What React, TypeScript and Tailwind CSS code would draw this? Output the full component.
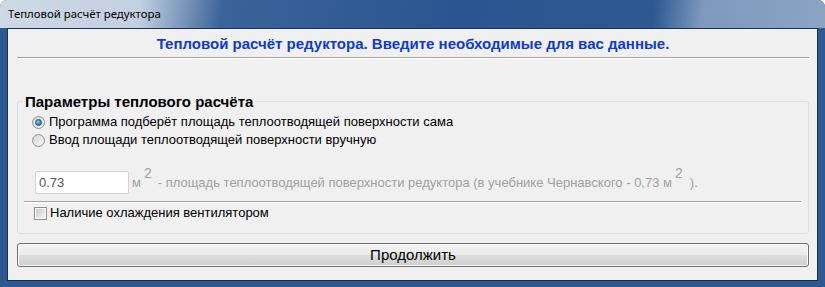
import React from 'react';

const Radio: React.FC<{ checked?: boolean }> = ({ checked }) => (
  <span className="flex h-[13px] w-[13px] shrink-0 items-center justify-center rounded-full border border-[#8e8f8f] bg-[linear-gradient(135deg,#d5d5d5,#f8f8f8)]">
    {checked && (
      <span className="h-[7px] w-[7px] rounded-full border border-[#1c4f89] bg-[radial-gradient(circle_at_35%_35%,#8ad1f6,#2b6fc2_70%)]" />
    )}
  </span>
);

const Checkbox: React.FC = () => (
  <span className="flex h-[13px] w-[13px] shrink-0 items-center justify-center border border-[#8e8f8f] bg-white">
    <span className="h-[9px] w-[9px] bg-[linear-gradient(135deg,#cbcbcb,#f4f4f4)]" />
  </span>
);

const App: React.FC = () => {
  return (
    <div className="h-[287px] w-[825px] overflow-hidden rounded-t-[7px] bg-[#2d5891] font-['Liberation_Sans',Arial,sans-serif]">
      {/* Title bar */}
      <div className="flex h-[28px] items-center bg-[linear-gradient(97deg,#cfd9e6_0%,#c3d0e0_17%,#3a6399_27%,#2b5590_55%,#2d5891_79%,#7e99bd_85%,#8ba4c4_100%)] pl-[8px]">
        <span className="font-['Noto_Sans',sans-serif] text-[11.4px] leading-[16px] text-black">
          Тепловой расчёт редуктора
        </span>
      </div>

      {/* Frame around client */}
      <div className="px-[7px] pb-[6px]">
        <div className="flex h-[253px] flex-col border border-[#1b2f52] bg-[#f0f0f0] px-[9px] pr-[8px]">
          {/* Header */}
          <div className="mt-[6px] h-[18px] text-center text-[15px] font-bold leading-[18px] text-[#0f3ad1]">
            Тепловой расчёт редуктора. Введите необходимые для вас данные.
          </div>
          <div className="mt-[4px] h-px bg-[#a0a0a0]" />
          <div className="h-px bg-white" />

          {/* Group box */}
          <fieldset className="mt-[34px] h-[141px] rounded-[3px] border border-[#d5dfe5]">
            <legend className="ml-[5px] px-[2px] text-[15px] font-bold leading-[17px] text-black">
              Параметры теплового расчёта
            </legend>
            <div className="flex flex-col pl-[14px] pr-[7px] pt-[3px]">
              <label className="flex h-[18px] items-center gap-[4px] text-[13px] text-black">
                <Radio checked />
                <span>Программа подберёт площадь теплоотводящей поверхности сама</span>
              </label>
              <label className="flex h-[18px] items-center gap-[4px] text-[13px] text-black">
                <Radio />
                <span>Ввод площади теплоотводящей поверхности вручную</span>
              </label>

              <div className="mt-[22px] flex items-center pl-[3px] text-[13px] text-[#a0a0a0]">
                <div className="flex h-[23px] w-[94px] items-center rounded-[2px] border border-[#d3d3d3] bg-white px-[3px] text-[#555555]">
                  0.73
                </div>
                <span className="ml-[3px] self-end pb-[2px]">м</span>
                <span className="relative -top-[9px] ml-[3px] text-[14px]">2</span>
                <span className="ml-[6px]">- площадь теплоотводящей поверхности редуктора (в учебнике Чернавского - 0,73 м</span>
                <span className="relative -top-[9px] ml-[3px] text-[14px]">2</span>
                <span className="ml-[7px]">).</span>
              </div>

              <div className="ml-[-8px] mt-[7px] h-px bg-[#a0a0a0]" />
              <div className="ml-[-8px] h-px bg-white" />

              <label className="mt-[2px] flex h-[16px] items-center gap-[3px] pl-[2px] text-[13px] text-black">
                <Checkbox />
                <span>Наличие охлаждения вентилятором</span>
              </label>
            </div>
          </fieldset>

          {/* Button */}
          <button className="mt-[9px] flex h-[24px] items-center justify-center rounded-[3px] border border-[#707070] bg-[linear-gradient(#f2f2f2_0%,#ebebeb_48%,#dddddd_52%,#cfcfcf_100%)] text-[15px] text-black shadow-[inset_0_0_0_1px_#fcfcfc]">
            Продолжить
          </button>
        </div>
      </div>
    </div>
  );
};

export default App;
